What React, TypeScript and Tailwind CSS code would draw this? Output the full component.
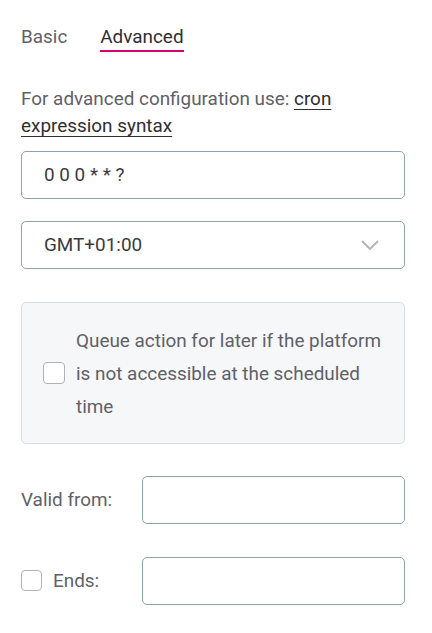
import React from 'react';

export default function App() {
  return (
    <div className="min-h-screen bg-white pl-[21px] pr-[27px] pt-[24px] font-['Roboto',sans-serif] text-[18.9px] text-[#5f6168]">
      {/* Tabs */}
      <div className="flex gap-[33px] leading-[26px]">
        <div className="text-[#5f6168]">Basic</div>
        <div className="border-b-2 border-[#d6006f] text-[#2e2f33]">Advanced</div>
      </div>

      <p className="mt-[33px] leading-[27px]">
        For advanced configuration use:{' '}
        <span className="text-[#2e2f33] underline underline-offset-[4px]">cron expression syntax</span>
      </p>

      <div className="mt-[12px] flex h-[48px] items-center rounded-[5px] border border-[#8fa3ae] px-[22px] text-[#3a3b3f]">
        0 0 0 * * ?
      </div>

      <div className="mt-[22px] flex h-[48px] items-center justify-between rounded-[5px] border border-[#8fa3ae] pl-[22px] pr-[25px] text-[#3a3b3f]">
        <span>GMT+01:00</span>
        <svg width="18" height="10" viewBox="0 0 18 10" fill="none">
          <path d="M1 1l8 8 8-8" stroke="#b4b6bb" strokeWidth="2" />
        </svg>
      </div>

      <div className="mt-[33px] flex h-[142px] items-center gap-[11px] rounded-[5px] border border-[#d9dee3] bg-[#f6f7f9] pl-[21px] pr-[20px]">
        <div className="h-[22px] w-[22px] shrink-0 rounded-[4px] border border-[#b0b2b6] bg-white" />
        <div className="leading-[33px]">
          Queue action for later if the platform is not accessible at the scheduled time
        </div>
      </div>

      <div className="mt-[32px] flex items-center">
        <div className="w-[121px]">Valid from:</div>
        <div className="h-[48px] flex-1 rounded-[5px] border border-[#8fa3ae]" />
      </div>

      <div className="mt-[33px] flex items-center">
        <div className="flex w-[121px] items-center gap-[11px]">
          <div className="h-[21px] w-[21px] shrink-0 rounded-[4px] border border-[#b0b2b6] bg-white" />
          <span>Ends:</span>
        </div>
        <div className="h-[48px] flex-1 rounded-[5px] border border-[#8fa3ae]" />
      </div>
    </div>
  );
}
